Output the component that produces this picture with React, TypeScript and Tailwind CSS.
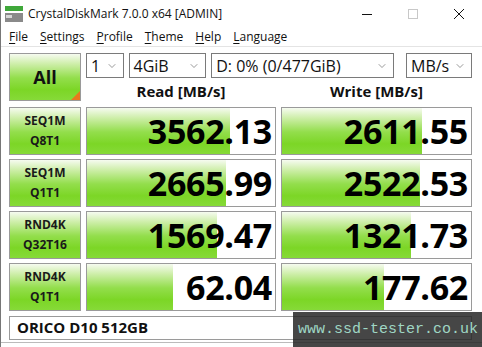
import { ChevronDown } from "lucide-react";

const font = { fontFamily: '"Open Sans", "Noto Sans", sans-serif' };

const rows = [
  { a: "SEQ1M", b: "Q8T1", read: "3562.13", write: "2611.55", rp: 76, wp: 74 },
  { a: "SEQ1M", b: "Q1T1", read: "2665.99", write: "2522.53", rp: 74, wp: 73 },
  { a: "RND4K", b: "Q32T16", read: "1569.47", write: "1321.73", rp: 69, wp: 68 },
  { a: "RND4K", b: "Q1T1", read: "62.04", write: "177.62", rp: 46, wp: 54 },
];

const greenBg =
  "bg-[linear-gradient(to_bottom,#f6fbf0_0%,#cdeea8_22%,#93de4c_52%,#7cd626_78%,#86da38_100%)]";

function Combo({ w, label }: { w: string; label: string }) {
  return (
    <div className={`${w} h-[25px] border border-[#7a7a7a] bg-white flex items-center justify-between pl-[4px] pr-[5px]`}>
      <span className="text-[16px] text-[#111] leading-none">{label}</span>
      <ChevronDown size={12} strokeWidth={1.2} className="text-[#555]" />
    </div>
  );
}

function Value({ text, pct }: { text: string; pct: number }) {
  return (
    <div className="relative h-[48px] border border-[#9a9a9a] bg-white overflow-hidden">
      <div className={`absolute inset-y-0 left-0 ${greenBg}`} style={{ width: `${pct}%` }} />
      <div className="relative h-full flex items-center justify-end pr-[3px] pt-[1px] text-[34px] font-bold tracking-[-0.3px] text-black leading-none">
        {text}
      </div>
    </div>
  );
}

export default function App() {
  return (
    <div className="relative w-[482px] h-[347px] overflow-hidden bg-white border-l border-[#777]" style={font}>
      {/* title bar */}
      <div className="h-[27px] flex items-center">
        <svg width="18" height="16" viewBox="0 0 18 16" className="ml-[4px] mr-[5px]">
          <rect x="0" y="0" width="18" height="5" fill="#3fa83a" />
          <rect x="0" y="7" width="18" height="9" fill="#8a8a8a" />
          <rect x="1" y="9" width="6" height="3" fill="#d8d8d8" />
        </svg>
        <span className="text-[12px] text-[#111]">CrystalDiskMark 7.0.0 x64 [ADMIN]</span>
        <div className="ml-auto flex items-center h-full">
          <div className="w-[46px] h-full flex items-center justify-center">
            <svg width="10" height="10"><line x1="0" y1="5.5" x2="10" y2="5.5" stroke="#111" /></svg>
          </div>
          <div className="w-[46px] h-full flex items-center justify-center">
            <svg width="10" height="10"><rect x="0.5" y="0.5" width="9" height="9" fill="none" stroke="#c8c8c8" /></svg>
          </div>
          <div className="w-[46px] h-full flex items-center justify-center">
            <svg width="10" height="10"><path d="M0 0 L10 10 M10 0 L0 10" stroke="#111" strokeWidth="1" /></svg>
          </div>
        </div>
      </div>

      {/* menu */}
      <div className="h-[20px] flex items-center pl-[8px] gap-[12px] text-[12px] text-[#111] border-b border-[#e4e4e4]">
        {["File", "Settings", "Profile", "Theme", "Help", "Language"].map((m) => (
          <span key={m}>
            <span className="underline underline-offset-2">{m[0]}</span>
            {m.slice(1)}
          </span>
        ))}
      </div>

      {/* body */}
      <div className="pl-[8px] pt-[6px] grid grid-cols-[72px_190px_191px] gap-x-[5px] gap-y-[4px]">
        <div className="relative h-[48px] border border-[#9a9a9a] flex items-center justify-center overflow-hidden">
          <div className={`absolute inset-0 ${greenBg}`} />
          <span className="relative text-[18px] font-bold text-[#111]">All</span>
          <svg width="9" height="9" className="absolute right-0 bottom-0">
            <path d="M9 0 L9 9 L0 9 Z" fill="#e8781e" />
          </svg>
        </div>
        <div className="col-span-2 flex flex-col">
          <div className="flex gap-[5px]">
            <Combo w="w-[38px]" label="1" />
            <Combo w="w-[79px]" label="4GiB" />
            <Combo w="w-[186px]" label="D: 0% (0/477GiB)" />
            <div className="w-[2px]" />
            <Combo w="w-[67px]" label="MB/s" />
          </div>
          <div className="grid grid-cols-[190px_191px] gap-x-[5px] flex-1 items-center">
            <div className="text-center text-[15px] font-bold text-[#111] pt-[2px]">Read [MB/s]</div>
            <div className="text-center text-[15px] font-bold text-[#111] pt-[2px]">Write [MB/s]</div>
          </div>
        </div>

        {rows.map((r, i) => (
          <div key={i} className="contents">
            <div className={`h-[48px] border border-[#9a9a9a] flex flex-col items-center justify-center ${greenBg}`}>
              <span className="text-[12px] font-bold text-[#1a1a1a] leading-[20px]">{r.a}</span>
              <span className="text-[12px] font-bold text-[#1a1a1a] leading-[20px]">{r.b}</span>
            </div>
            <Value text={r.read} pct={r.rp} />
            <Value text={r.write} pct={r.wp} />
          </div>
        ))}

        <div className="col-span-3 h-[24px] border border-[#9a9a9a] bg-white flex items-center pl-[7px] text-[15px] font-bold text-[#111] mt-[1px]">
          ORICO D10 512GB
        </div>
      </div>

      <div className="absolute left-0 right-0 top-[342px] border-t border-[#bbb]" />

      {/* watermark */}
      <div className="absolute left-[292px] top-[312px] w-[190px] h-[35px] bg-[#262626]/85 flex items-center pl-[5px]">
        <span className="text-[15px] text-[#9fd6c4] leading-none" style={{ fontFamily: '"Liberation Mono", monospace' }}>
          www.ssd-tester.co.uk
        </span>
      </div>
    </div>
  );
}
